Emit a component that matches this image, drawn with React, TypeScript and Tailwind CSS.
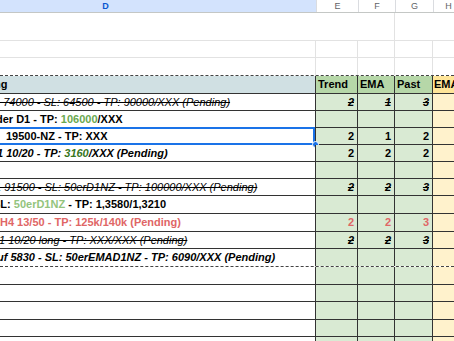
import type { ReactNode } from 'react';

type Line = {
  h: string;
  indent: string;
  text?: ReactNode;
  textClass?: string;
  nums?: [string, string, string];
  numClass?: string;
  dashed?: boolean;
  selected?: boolean;
};

const rows: Line[] = [
  {
    h: 'h-[17px]',
    indent: 'ml-[-6px]',
    text: '1 74000 - SL: 64500 - TP: 90000/XXX (Pending)',
    textClass: 'italic line-through',
    nums: ['2', '1', '3'],
    numClass: 'font-bold italic line-through',
  },
  {
    h: 'h-[17px]',
    indent: 'ml-[-4px]',
    text: (
      <>
        der D1 - TP: <span className="text-[#6aa84f]">106000</span>/XXX
      </>
    ),
    textClass: 'font-bold',
  },
  {
    h: 'h-[17px]',
    indent: 'ml-[6px]',
    text: '19500-NZ - TP: XXX',
    textClass: 'font-bold',
    nums: ['2', '1', '2'],
    numClass: 'font-bold',
    selected: true,
  },
  {
    h: 'h-[17px]',
    indent: 'ml-[-3px]',
    text: (
      <>
        1 10/20 - TP: <span className="text-[#38761d]">3160</span>/XXX (Pending)
      </>
    ),
    textClass: 'font-bold italic',
    nums: ['2', '2', '2'],
    numClass: 'font-bold',
  },
  { h: 'h-[17px]', indent: 'ml-[0px]' },
  {
    h: 'h-[17px]',
    indent: 'ml-[-5px]',
    text: '1 91500 - SL: 50erD1NZ - TP: 100000/XXX (Pending)',
    textClass: 'italic line-through',
    nums: ['2', '2', '3'],
    numClass: 'font-bold italic line-through',
  },
  {
    h: 'h-[18px]',
    indent: 'ml-[-7px]',
    text: (
      <>
        SL: <span className="text-[#93c47d]">50erD1NZ</span> - TP: 1,3580/1,3210
      </>
    ),
    textClass: 'font-bold',
  },
  {
    h: 'h-[18px]',
    indent: 'ml-[0px]',
    text: 'H4 13/50 - TP: 125k/140k (Pending)',
    textClass: 'font-bold text-[#e06666]',
    nums: ['2', '2', '3'],
    numClass: 'font-bold text-[#e06666]',
  },
  {
    h: 'h-[17px]',
    indent: 'ml-[-1px]',
    text: '1 10/20 long - TP: XXX/XXX (Pending)',
    textClass: 'italic line-through',
    nums: ['2', '2', '3'],
    numClass: 'font-bold italic line-through',
  },
  {
    h: 'h-[18px]',
    indent: 'ml-[-3px]',
    text: 'uf 5830 - SL: 50erEMAD1NZ - TP: 6090/XXX (Pending)',
    textClass: 'font-bold italic',
    dashed: true,
  },
  { h: 'h-[18px]', indent: 'ml-[0px]' },
  { h: 'h-[17px]', indent: 'ml-[0px]' },
  { h: 'h-[18px]', indent: 'ml-[0px]' },
  { h: 'h-[17px]', indent: 'ml-[0px]' },
  { h: 'h-[18px]', indent: 'ml-[0px]' },
];

function NumCell({ w, cls, children }: { w: string; cls?: string; children?: ReactNode }) {
  return (
    <div
      className={`${w} shrink-0 border-r border-[#333] bg-[#d9ead3] pr-[3px] text-right leading-[16px] ${cls ?? ''}`}
    >
      {children}
    </div>
  );
}

function TableRow({ row }: { row: Line }) {
  return (
    <div
      className={`relative flex ${row.h} border-b ${
        row.dashed ? 'border-dashed border-[#444]' : 'border-solid border-[#333]'
      }`}
    >
      <div className="w-[316px] shrink-0 overflow-hidden whitespace-nowrap border-r border-[#333] leading-[16px]">
        {row.text && <span className={`inline-block ${row.indent} ${row.textClass ?? ''}`}>{row.text}</span>}
      </div>
      <NumCell w="w-[42px]" cls={row.numClass}>{row.nums?.[0]}</NumCell>
      <NumCell w="w-[37px]" cls={row.numClass}>{row.nums?.[1]}</NumCell>
      <NumCell w="w-[38px]" cls={row.numClass}>{row.nums?.[2]}</NumCell>
      <div className="flex-1 bg-[#fff2cc]" />

      {row.selected && (
        <>
          <div className="pointer-events-none absolute left-[-4px] top-[-1px] h-[18px] w-[319px] border-2 border-[#1a73e8]" />
          <div className="absolute left-[312px] top-[13px] h-[7px] w-[7px] rounded-full border border-white bg-[#1a73e8]" />
        </>
      )}
    </div>
  );
}

export default function App() {
  return (
    <div className="h-[341px] w-[454px] overflow-hidden bg-white font-['Liberation_Sans',Arial,sans-serif] text-[11px] text-black">
      {/* column letters */}
      <div className="flex h-[13px] border-b border-[#c4c7c5] text-[9px] leading-[12px] text-[#5f6368]">
        <div className="ml-[-105px] w-[421px] shrink-0 bg-[#d3e3fd] text-center font-bold text-[#0b57d0]">D</div>
        <div className="w-[42px] shrink-0 border-l border-[#dadce0] text-center">E</div>
        <div className="w-[37px] shrink-0 border-l border-[#dadce0] text-center">F</div>
        <div className="w-[38px] shrink-0 border-l border-[#dadce0] text-center">G</div>
        <div className="w-[30px] shrink-0 border-l border-[#dadce0] text-center">H</div>
      </div>

      {/* empty rows above the table */}
      <div className="flex h-[28px] border-b border-[#e2e2e2]">
        <div className="w-[395px] shrink-0 border-r border-[#e2e2e2]" />
        <div className="flex-1" />
      </div>
      <div className="flex h-[17px] border-b border-[#e2e2e2]">
        <div className="w-[316px] shrink-0 border-r border-[#e2e2e2]" />
        <div className="w-[42px] shrink-0 border-r border-[#e2e2e2]" />
        <div className="w-[37px] shrink-0 border-r border-[#e2e2e2]" />
        <div className="w-[38px] shrink-0 border-r border-[#e2e2e2]" />
        <div className="flex-1" />
      </div>
      <div className="flex h-[18px] border-b border-dashed border-[#444]">
        <div className="w-[316px] shrink-0 border-r border-[#e2e2e2]" />
        <div className="w-[42px] shrink-0 border-r border-[#e2e2e2]" />
        <div className="w-[37px] shrink-0 border-r border-[#e2e2e2]" />
        <div className="w-[38px] shrink-0 border-r border-[#e2e2e2]" />
        <div className="flex-1" />
      </div>

      {/* table header */}
      <div className="flex h-[18px] border-b border-[#333] font-bold leading-[17px]">
        <div className="w-[316px] shrink-0 overflow-hidden whitespace-nowrap border-r border-[#333] bg-[#d0e0e3]">
          <span className="ml-[-9px] inline-block">ing</span>
        </div>
        <div className="w-[42px] shrink-0 border-r border-[#333] bg-[#b6d7a8] pl-[2px]">Trend</div>
        <div className="w-[37px] shrink-0 border-r border-[#333] bg-[#b6d7a8] pl-[2px]">EMA</div>
        <div className="w-[38px] shrink-0 border-r border-[#333] bg-[#b6d7a8] pl-[2px]">Past</div>
        <div className="flex-1 whitespace-nowrap bg-[#ffe599] pl-[1px]">EMA</div>
      </div>

      {rows.map((row, i) => (
        <TableRow key={i} row={row} />
      ))}
    </div>
  );
}
